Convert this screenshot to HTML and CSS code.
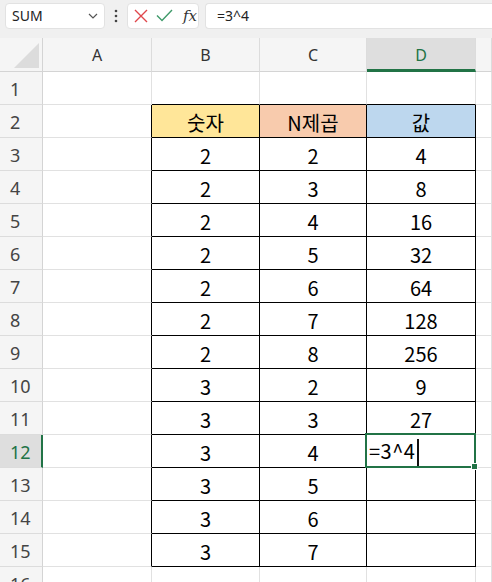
FILE: index.html
```html
<!DOCTYPE html>
<html lang="ko">
<head>
  <meta charset="UTF-8">
  <title>N제곱</title>
  <link rel="stylesheet" href="styles.css">
</head>
<body>

  <div class="toolbar">
    <div class="namebox">
      <span>SUM</span>
      <svg class="chev" width="10" height="6" viewBox="0 0 10 6"><path d="M1 1l4 4 4-4" fill="none" stroke="#555" stroke-width="1.2"/></svg>
    </div>
    <div class="dots">
      <svg width="4" height="14" viewBox="0 0 4 14"><circle cx="2" cy="2" r="1.3" fill="#444"/><circle cx="2" cy="7" r="1.3" fill="#444"/><circle cx="2" cy="12" r="1.3" fill="#444"/></svg>
    </div>
    <div class="fxbox">
      <svg width="14" height="14" viewBox="0 0 14 14"><path d="M1 1l12 12M13 1L1 13" stroke="#e0474c" stroke-width="1.4"/></svg>
      <svg width="17" height="13" viewBox="0 0 17 13"><path d="M1 6.5l5 5L16 1" fill="none" stroke="#3f9a6a" stroke-width="1.4"/></svg>
      <span class="fx">fx</span>
    </div>
    <div class="formula">=3^4</div>
  </div>

  <div class="sheet" id="sheet">
    <!-- Cells added via JS -->
  </div>

  <script>
    const sheet = document.getElementById('sheet');
    const cols = ["A", "B", "C", "D", ""];
    const labels = ["숫자", "N제곱", "값"];
    const bases = [2, 2, 2, 2, 2, 2, 2, 3, 3, 3, 3, 3, 3];
    const powers = [2, 3, 4, 5, 6, 7, 8, 2, 3, 4, 5, 6, 7];
    const values = [4, 8, 16, 32, 64, 128, 256, 9, 27, "", "", "", ""];
    const headClass = ["gold", "peach", "blue"];

    function cell(cls, text) {
      const div = document.createElement("div");
      div.className = "cell " + cls;
      div.textContent = text;
      sheet.appendChild(div);
      return div;
    }

    // Column headers
    cell("corner", "");
    cols.forEach(c => cell("colhead" + (c === "D" ? " active" : ""), c));

    for (let r = 1; r <= 16; r++) {
      cell("rowhead" + (r === 12 ? " active" : ""), r);

      for (let c = 0; c < 5; c++) {
        let cls = "";
        let text = "";
        const inTable = r >= 2 && r <= 15 && c >= 1 && c <= 3;

        if (inTable) cls += " boxed";
        if (c === 0 && r >= 2 && r <= 15) cls += " edge-r";
        if (r === 1 && c >= 1 && c <= 3) cls += " edge-b";

        if (r === 2 && inTable) {
          cls += " " + headClass[c - 1];
          text = labels[c - 1];
        } else if (inTable) {
          const i = r - 3;
          text = [bases[i], powers[i], values[i]][c - 1];
        }

        const div = cell(cls, text);
        if (r === 12 && c === 3) {
          div.className += " editing";
          div.innerHTML = '=3^4<i class="caret"></i>';
        }
      }
    }
  </script>

</body>
</html>
```

FILE: styles.css
```css
body {
  margin: 0;
  width: 492px;
  height: 582px;
  overflow: hidden;
  background: #fff;
  font-family: "Noto Sans", "Open Sans", sans-serif;
}

.toolbar {
  display: flex;
  align-items: center;
  height: 38px;
  padding: 0 0 7px 5px;
  box-sizing: border-box;
  background: #f0f0f0;
}

.namebox {
  width: 100px;
  height: 26px;
  box-sizing: border-box;
  display: flex;
  align-items: center;
  justify-content: space-between;
  padding: 0 6px 0 6px;
  background: #fff;
  border: 1px solid #e2e2e2;
  border-radius: 4px;
  font-size: 14px;
  color: #222;
}

.dots {
  width: 22px;
  display: flex;
  justify-content: center;
}

.fxbox {
  width: 72px;
  height: 26px;
  box-sizing: border-box;
  display: flex;
  align-items: center;
  gap: 8px;
  padding-left: 6px;
  background: #fff;
  border: 1px solid #e2e2e2;
  border-radius: 4px;
}

.fx {
  font-family: "DejaVu Serif", "Liberation Serif", serif;
  font-style: italic;
  font-size: 15px;
  color: #333;
  margin-left: 2px;
}

.formula {
  flex: 1;
  height: 26px;
  box-sizing: border-box;
  margin-left: 6px;
  padding-left: 11px;
  display: flex;
  align-items: center;
  background: #fff;
  border: 1px solid #e2e2e2;
  border-right: none;
  border-radius: 4px 0 0 4px;
  font-size: 14px;
  color: #222;
}

.sheet {
  display: grid;
  grid-template-columns: 43px 109px 108px 107px 109px 1fr;
  grid-template-rows: 34px repeat(16, 33px);
}

.cell {
  box-sizing: border-box;
  border-right: 1px solid #e1e1e1;
  border-bottom: 1px solid #e1e1e1;
  display: flex;
  align-items: center;
  justify-content: center;
  padding-top: 2px;
  font-family: "Noto Sans CJK KR", "Noto Sans", sans-serif;
  font-size: 20px;
  color: #000;
}

.corner {
  position: relative;
  background: #f5f5f5;
  border-right: 1px solid #d4d4d4;
  border-bottom: 1px solid #d4d4d4;
}

.corner::after {
  content: "";
  position: absolute;
  right: 3px;
  bottom: 3px;
  width: 0;
  height: 0;
  border-left: 25px solid transparent;
  border-bottom: 25px solid #dcdcdc;
}

.colhead {
  background: #f5f5f5;
  border-right: 1px solid #dcdcdc;
  border-bottom: 1px solid #d4d4d4;
  font-family: "Noto Sans", sans-serif;
  font-size: 16px;
  color: #333;
  padding-top: 0;
}

.colhead.active {
  background: #dedede;
  color: #217346;
  border-bottom: 3px solid #217346;
  padding-top: 2px;
}

.rowhead {
  background: #f5f5f5;
  border-right: 1px solid #d4d4d4;
  border-bottom: 1px solid #dcdcdc;
  justify-content: flex-start;
  padding-left: 10px;
  font-family: "Noto Sans", sans-serif;
  font-size: 18px;
  color: #444;
}

.rowhead.active {
  background: #dedede;
  color: #217346;
  border-right: 2px solid #217346;
}

.boxed {
  border-right: 1px solid #000;
  border-bottom: 1px solid #000;
}

.edge-r {
  border-right: 1px solid #000;
}

.edge-b {
  border-bottom: 1px solid #000;
}

.gold {
  background: #ffe699;
}

.peach {
  background: #f8cbad;
}

.blue {
  background: #bdd7ee;
}

.editing {
  position: relative;
  display: block;
  padding: 0 0 0 2px;
  line-height: 32px;
  letter-spacing: 0.5px;
  text-align: left;
}

.caret {
  display: inline-block;
  width: 2px;
  height: 29px;
  margin-left: 2px;
  vertical-align: middle;
  background: #111;
}

.editing::after {
  content: "";
  position: absolute;
  left: -2px;
  top: -2px;
  right: -1px;
  bottom: -1px;
  border: 2px solid #217346;
}

.editing::before {
  content: "";
  position: absolute;
  right: -3px;
  bottom: -3px;
  width: 5px;
  height: 5px;
  background: #217346;
  border: 1px solid #fff;
  z-index: 1;
}
```
